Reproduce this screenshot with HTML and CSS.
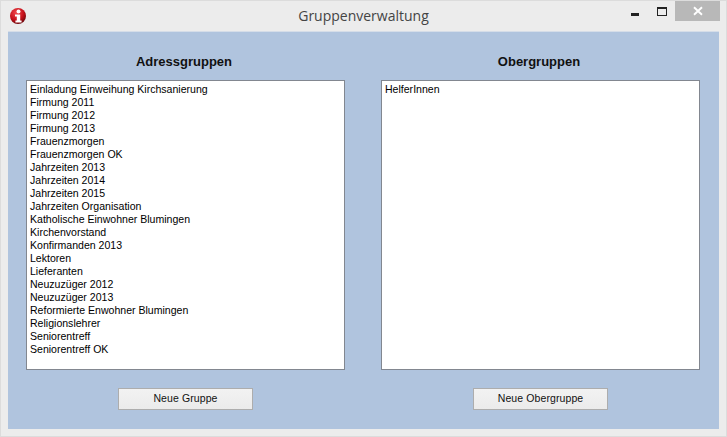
FILE: index.html
```html
<!DOCTYPE html>
<html lang="de">
<head>
<meta charset="utf-8">
<title>Gruppenverwaltung</title>
<link rel="stylesheet" href="styles.css">
</head>
<body>
<div class="window">
  <header class="titlebar">
    <svg class="app-icon" width="18" height="18" viewBox="0 0 18 18" aria-hidden="true">
      <defs>
        <radialGradient id="ball" cx="40%" cy="30%" r="75%">
          <stop offset="0" stop-color="#f0484c"/>
          <stop offset="0.6" stop-color="#c5101a"/>
          <stop offset="1" stop-color="#5e0408"/>
        </radialGradient>
      </defs>
      <circle cx="9" cy="9" r="8" fill="url(#ball)"/>
      <circle cx="9.5" cy="4.6" r="2" fill="#fff"/>
      <path d="M6 7.4h5.2v6h1.4v2H6.4v-2h1.4V9.4H6z" fill="#fff"/>
    </svg>
    <h1 class="title">Gruppenverwaltung</h1>
    <div class="controls">
      <span class="minimize"></span>
      <span class="maximize"></span>
      <span class="close">
        <svg width="10" height="10" viewBox="0 0 10 10" aria-hidden="true"><path d="M1 1.2L9 8.8M9 1.2L1 8.8" stroke="#fff" stroke-width="1.9" fill="none"/></svg>
      </span>
    </div>
  </header>
  <main class="panel">
    <section class="group">
      <h2 class="group-title">Adressgruppen</h2>
      <ul class="list">
        <li>Einladung Einweihung Kirchsanierung</li>
        <li>Firmung 2011</li>
        <li>Firmung 2012</li>
        <li>Firmung 2013</li>
        <li>Frauenzmorgen</li>
        <li>Frauenzmorgen OK</li>
        <li>Jahrzeiten 2013</li>
        <li>Jahrzeiten 2014</li>
        <li>Jahrzeiten 2015</li>
        <li>Jahrzeiten Organisation</li>
        <li>Katholische Einwohner Blumingen</li>
        <li>Kirchenvorstand</li>
        <li>Konfirmanden 2013</li>
        <li>Lektoren</li>
        <li>Lieferanten</li>
        <li>Neuzuzüger 2012</li>
        <li>Neuzuzüger 2013</li>
        <li>Reformierte Enwohner Blumingen</li>
        <li>Religionslehrer</li>
        <li>Seniorentreff</li>
        <li>Seniorentreff OK</li>
      </ul>
      <button class="btn" type="button">Neue Gruppe</button>
    </section>
    <section class="group">
      <h2 class="group-title">Obergruppen</h2>
      <ul class="list">
        <li>HelferInnen</li>
      </ul>
      <button class="btn" type="button">Neue Obergruppe</button>
    </section>
  </main>
</div>
</body>
</html>
```
FILE: styles.css
```css
* { box-sizing: border-box; }
html, body { margin: 0; padding: 0; }
body { width: 727px; height: 437px; overflow: hidden; font-family: "Liberation Sans", Arial, sans-serif; }
.window {
  width: 727px; height: 437px;
  background: #ececec;
  border: 1px solid #dcdcdc;
  display: flex; flex-direction: column;
  padding: 0 7px 7px;
}
.titlebar { height: 30px; display: flex; align-items: center; position: relative; flex: none; }
.app-icon { margin: -1px 0 0 1px; flex: none; }
.title {
  position: absolute; left: 0; right: 0; top: 6px;
  margin: 0; text-align: center;
  font: 400 14px/17px "Open Sans", "Liberation Sans", sans-serif;
  color: #444;
}
.controls { position: absolute; right: -1px; top: 0; display: flex; align-items: flex-start; }
.minimize { width: 8px; height: 3px; background: #222; margin: 12px 18px 0 0; }
.maximize { width: 10px; height: 9px; border: 1px solid #222; border-top-width: 2px; margin: 6px 8px 0 0; }
.close { width: 45px; height: 20px; background: #b8b8b8; display: flex; align-items: center; justify-content: center; }
.panel {
  flex: 1;
  background: #b0c4de;
  border-top: 1px solid #d5dde8;
  display: flex; gap: 36px;
  padding: 0 19px 0 18px;
}
.group { width: 319px; display: flex; flex-direction: column; align-items: center; }
.group-title {
  margin: 21px 3px 10px 0; height: 17px;
  font: 700 13px/17px "Liberation Sans", Arial, sans-serif;
  color: #111;
}
.list {
  width: 100%; height: 290px; margin: 0; padding: 2px 3px;
  list-style: none;
  background: #fff;
  border: 1px solid #828790;
}
.list li { height: 13px; font-size: 10.55px; line-height: 13px; color: #000; white-space: nowrap; }
.btn {
  width: 135px; height: 22px; margin-top: 18px; padding: 0 0 1px;
  background: linear-gradient(#f2f2f2, #ebebeb);
  border: 1px solid #adadad;
  font: 400 10.5px/19px "Liberation Sans", Arial, sans-serif;
  letter-spacing: 0.1px;
  color: #111;
}
```
